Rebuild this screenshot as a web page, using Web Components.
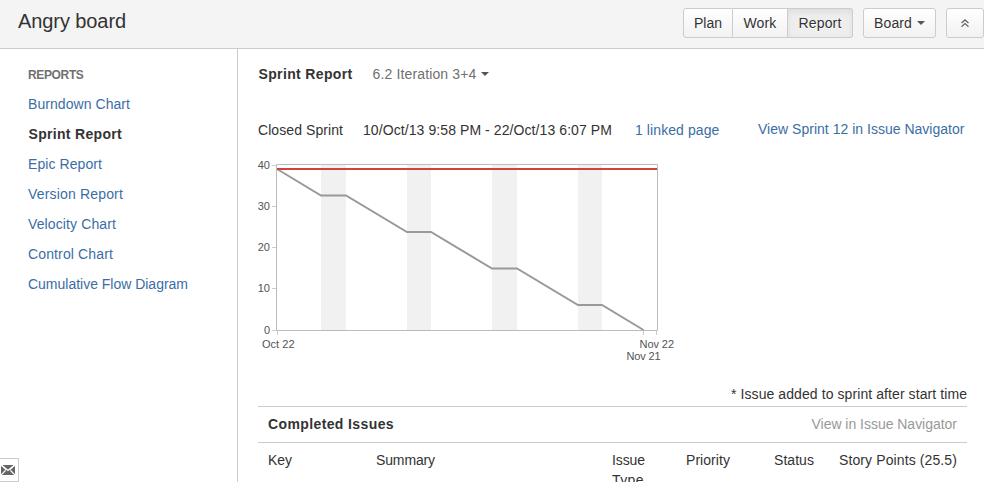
<!DOCTYPE html>
<html lang="en">
<head>
<meta charset="utf-8">
<title>Angry board</title>
<style>
html,body{margin:0;height:100%;overflow:hidden;background:#fff}
body{font:14px/20px "Liberation Sans",Arial,sans-serif;color:#333}
</style>
</head>
<body>
<board-app></board-app>
<script>
const define = (name, html, setup) => {
  const t = document.createElement('template');
  t.innerHTML = html;
  customElements.define(name, class extends HTMLElement {
    connectedCallback() {
      if (this.shadowRoot) return;
      this.attachShadow({mode: 'open'}).append(t.content.cloneNode(true));
      if (setup) setup(this, this.shadowRoot);
    }
  });
};

// A single line of text, tracked so that it spans the width given in "w".
define('text-run', `<style>:host{display:inline-block;white-space:nowrap}</style><slot></slot>`, host => {
  const w = +host.getAttribute('w');
  host.style.letterSpacing = (w - host.getBoundingClientRect().width) / host.textContent.length + 'px';
  host.style.width = w + 'px';
});

define('caret-down', `<style>:host{display:inline-block;width:8px;height:4px}svg{display:block}</style>
<svg width="8" height="4"><path d="M0 0H8L4 4Z" fill="currentColor"/></svg>`);

define('tool-button', `<style>
:host{box-sizing:border-box;height:30px;display:flex;align-items:center;justify-content:center;border:1px solid #ccc;border-radius:3px;background:linear-gradient(#fff,#f2f2f2);text-shadow:0 1px 0 #fff}
:host([place=first]){border-radius:3px 0 0 3px}
:host([place=mid]){border-radius:0;border-left:0}
:host([place=last]){border-radius:0 3px 3px 0;border-left-width:0}
:host([active]){background:#eee;box-shadow:inset 0 3px 6px #ddd}
</style><slot></slot>`);

define('app-header', `<style>
:host{box-sizing:border-box;height:49px;display:flex;background:#f4f4f4;border-bottom:1px solid #ccc}
h1{margin:0;padding:9px 0 0 18px;font:20px/24px "Liberation Sans",Arial,sans-serif;flex:1}
.tools{display:flex;padding-top:8px;gap:10px}
.group{display:flex}
caret-down{margin:0 0 0 5px;color:#555}
</style>
<h1><text-run w="108">Angry board</text-run></h1>
<div class="tools">
<div class="group">
<tool-button place="first" style="width:50px"><text-run w="28">Plan</text-run></tool-button>
<tool-button place="mid" style="width:55px"><text-run w="33">Work</text-run></tool-button>
<tool-button place="last" active style="width:65px"><text-run w="43">Report</text-run></tool-button>
</div>
<tool-button style="width:73px"><text-run w="38">Board</text-run><caret-down></caret-down></tool-button>
<tool-button style="width:38px"><svg width="8" height="8" fill="none" stroke="#666" stroke-width="1.3"><path d="M.5 4L4 .9L7.500 4M.5 7.700L4 4.600L7.500 7.700"/></svg></tool-button>
</div>`);

define('report-link', `<style>:host{display:block;height:30px;line-height:30px;color:#3b6ea5}:host([current]){font-weight:bold;color:#333}:host([heading]){font-size:12px;line-height:32px;font-weight:bold;color:#707070}</style><slot></slot>`);

define('report-nav', `<style>
:host{box-sizing:border-box;width:238px;flex:none;padding:10px 0 0 28px;border-right:1px solid #ccc;display:flex;flex-direction:column}
.feedback{box-sizing:border-box;margin:auto 0 0 -29px;width:20px;height:24px;border:1px solid #ccc;display:grid;place-items:center start;padding-left:1px}
</style>
<report-link heading><text-run w="55.500">REPORTS</text-run></report-link>
<report-link><text-run w="102">Burndown Chart</text-run></report-link>
<report-link current><text-run style="margin-left:.5px" w="93.500">Sprint Report</text-run></report-link>
<report-link><text-run w="74">Epic Report</text-run></report-link>
<report-link><text-run w="95">Version Report</text-run></report-link>
<report-link><text-run w="88">Velocity Chart</text-run></report-link>
<report-link><text-run w="85">Control Chart</text-run></report-link>
<report-link><text-run w="160">Cumulative Flow Diagram</text-run></report-link>
<div class="feedback"><svg width="14" height="10"><rect width="14" height="10" fill="#666"/><path d="M0 0L5.300 4.800M14 0L8.700 4.800M0 10L4.500 5.500M14 10L9.500 5.500M.5 0L7 5.500L13.500 0" fill="none" stroke="#fff" stroke-width="1.200"/></svg></div>`);

define('sprint-chart', `<style>:host{display:block;width:430px;height:215px}svg{display:block;font-size:11px;fill:#545454}</style>
<svg width="430" height="215" viewBox="258 155 430 215">
<g fill="#f1f1f1"><path d="M321 165h25v165h-25zM407 165h24v165h-24zM492 165h25v165h-25zM578 165h24v165h-24z"/></g>
<path d="M276.500 164.500H657.500V330.500H276.500Z" fill="none" stroke="#bbb"/>
<path d="M272 165.500h4M272 206.500h4M272 247.500h4M272 288.500h4M272 330.500h4M277.500 331v4M643.500 331v4M656.500 331v4" stroke="#ccc"/>
<path d="M277 169L321 195.500H346L407 232H431L492 268.500H517L578 305H602L643.500 330" fill="none" stroke="#999" stroke-width="2"/>
<path d="M277 169H657" stroke="#d04437" stroke-width="2"/>
<g text-anchor="end"><text x="270" y="169">40</text><text x="270" y="210">30</text><text x="270" y="251">20</text><text x="270" y="292">10</text><text x="270" y="334">0</text></g>
<text x="262" y="348" textLength="32.500">Oct 22</text><text x="639.500" y="348" textLength="34.500">Nov 22</text><text x="626.500" y="360" textLength="34">Nov 21</text>
</svg>`);

define('issue-table', `<style>
:host{display:block;width:709px}
.bar{height:35px;border:solid #ccc;border-width:1px 0;display:flex;justify-content:space-between;align-items:center;padding:0 10px}
b{display:block;margin-top:-1px}.muted{color:#999;margin-top:-1px}
.head{display:grid;grid-template-columns:108px 236px 74px 88px 65px auto;padding:7px 0 0 10px;line-height:20px}
</style>
<div class="bar"><b><text-run w="126">Completed Issues</text-run></b><text-run class="muted" w="145.500">View in Issue Navigator</text-run></div>
<div class="head"><span><text-run w="24">Key</text-run></span><span><text-run w="59">Summary</text-run></span><span><text-run w="33">Issue</text-run><br><text-run w="32">Type</text-run></span><span><text-run w="44">Priority</text-run></span><span><text-run w="40">Status</text-run></span><span><text-run w="118">Story Points (25.5)</text-run></span></div>`);

define('sprint-report', `<style>
:host{display:block;flex:1;padding:15px 17px 0 20px;overflow:hidden}
.title,.meta{display:flex;height:20px}
.title b{margin:0 20px 0 .5px}.pick{color:#707070}
.title caret-down{margin:8px 0 0 4.500px;color:#555}
.meta{margin-top:36px;gap:20px}
.link{color:#3b6ea5}.nav{margin:-1px 2.500px 0 auto}
.note{text-align:right;height:20px;margin-top:14px;margin-bottom:2px}
sprint-chart{margin-top:15px}
</style>
<div class="title"><b><text-run w="94">Sprint Report</text-run></b><text-run class="pick" w="104">6.2 Iteration 3+4</text-run><caret-down></caret-down></div>
<div class="meta"><text-run w="85">Closed Sprint</text-run><text-run w="249">10/Oct/13 9:58 PM - 22/Oct/13 6:07 PM</text-run><text-run class="link" style="margin-left:3px" w="84.500">1 linked page</text-run><text-run class="link nav" w="206.500">View Sprint 12 in Issue Navigator</text-run></div>
<sprint-chart></sprint-chart>
<div class="note"><text-run w="236">* Issue added to sprint after start time</text-run></div>
<issue-table></issue-table>`);

define('board-app', `<style>:host{display:flex;flex-direction:column;height:100vh;overflow:hidden}main{display:flex;flex:1;min-height:0}</style>
<app-header></app-header><main><report-nav></report-nav><sprint-report></sprint-report></main>`);
</script>
</body>
</html>
